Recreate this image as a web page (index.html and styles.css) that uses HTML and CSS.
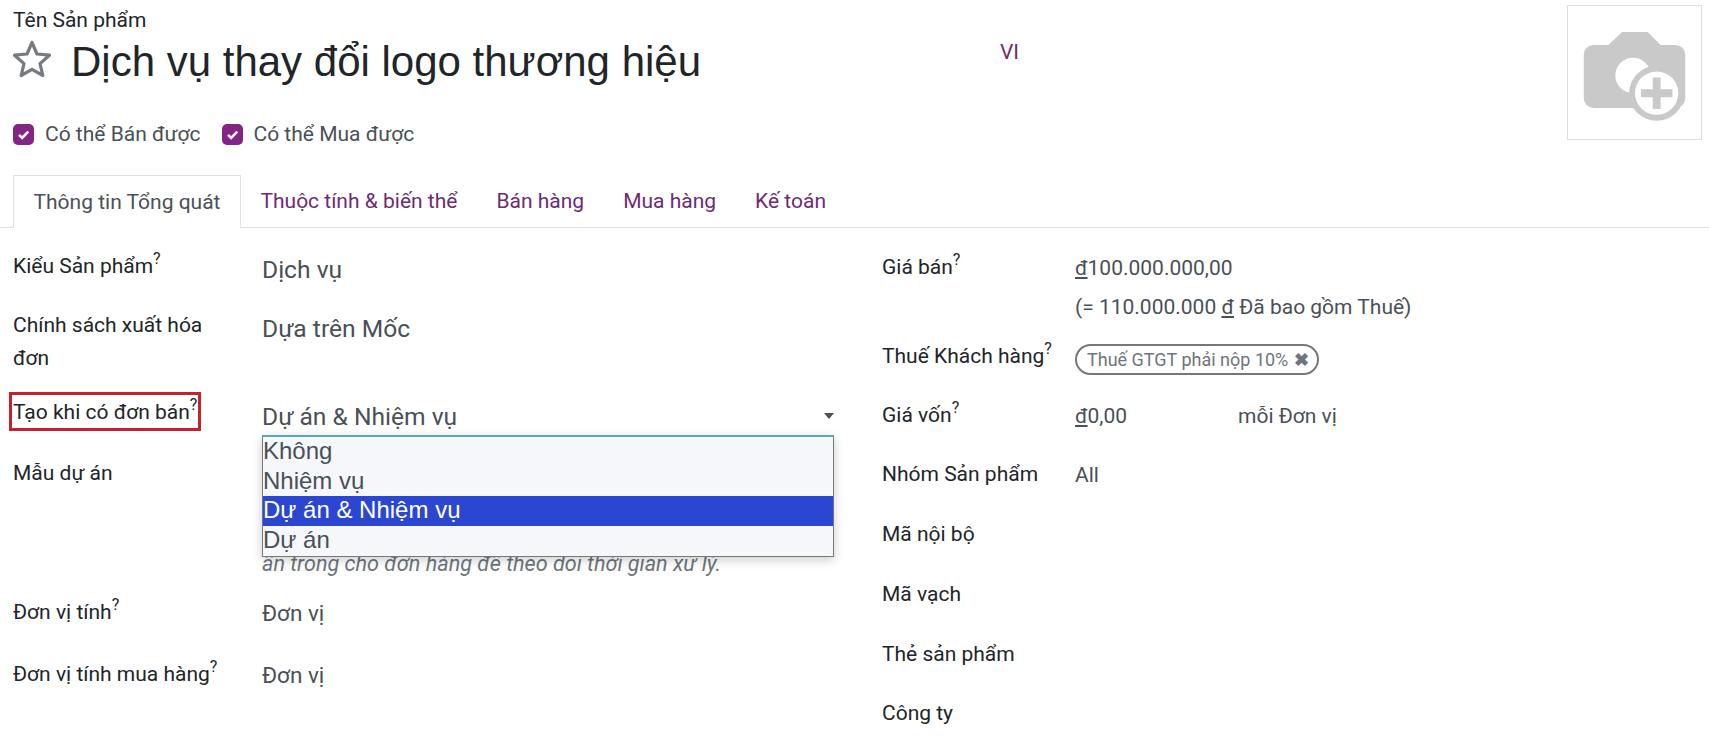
FILE: index.html

```html
<!DOCTYPE html>
<html lang="vi">
<head>
  <meta charset="UTF-8" />
  <title>Dịch vụ thay đổi logo thương hiệu</title>
  <link rel="stylesheet" href="styles.css">
</head>
<body>

  <header class="head">
    <div class="head-main">
      <div class="name-label">Tên Sản phẩm</div>
      <div class="title-row">
        <div class="title-left">
          <svg class="star" viewBox="0 0 40 38" width="40" height="38">
            <polygon points="20,2.5 25,14 37.5,15.2 28,23.6 30.8,35.5 20,29.3 9.2,35.5 12,23.6 2.5,15.2 15,14" fill="none" stroke="#757b80" stroke-width="3.2" stroke-linejoin="round"/>
          </svg>
          <h1 class="title">Dịch vụ thay đổi logo thương hiệu</h1>
        </div>
        <span class="lang">VI</span>
      </div>
      <div class="checks">
        <label class="check">
          <span class="box"><svg viewBox="0 0 21 21" width="21" height="21"><path d="M6 10.8l3.2 3.2 6-6.4" fill="none" stroke="#fff" stroke-width="2.6"/></svg></span>
          Có thể Bán được
        </label>
        <label class="check">
          <span class="box"><svg viewBox="0 0 21 21" width="21" height="21"><path d="M6 10.8l3.2 3.2 6-6.4" fill="none" stroke="#fff" stroke-width="2.6"/></svg></span>
          Có thể Mua được
        </label>
      </div>
    </div>
    <div class="photo">
      <svg viewBox="0 0 135 134" width="133" height="133">
        <path d="M41 39L55 26H81L94 39H109a10 10 0 0 1 10 10V93a10 10 0 0 1-10 10H26a10 10 0 0 1-10-10V49a10 10 0 0 1 10-10Z" fill="#c9c9c9"/>
        <circle cx="66" cy="70" r="18" fill="#fff"/>
        <circle cx="90" cy="88" r="28" fill="#c9c9c9"/>
        <circle cx="90" cy="88" r="22" fill="#fff"/>
        <path d="M86 72h8v12h12v8H94v12h-8V92H74v-8h12Z" fill="#c9c9c9"/>
      </svg>
    </div>
  </header>

  <nav class="tabs">
    <a class="tab active">Thông tin Tổng quát</a>
    <a class="tab">Thuộc tính &amp; biến thể</a>
    <a class="tab">Bán hàng</a>
    <a class="tab">Mua hàng</a>
    <a class="tab">Kế toán</a>
  </nav>

  <main class="form">
    <section class="col-left">
      <div class="row row-59">
        <div class="lbl">Kiểu Sản phẩm<sup>?</sup></div>
        <div class="val val-lg">Dịch vụ</div>
      </div>
      <div class="row row-89">
        <div class="lbl">Chính sách xuất hóa đơn</div>
        <div class="val val-lg">Dựa trên Mốc</div>
      </div>
      <div class="row row-59">
        <div class="lbl"><span class="marked">Tạo khi có đơn bán<sup>?</sup></span></div>
        <div class="val val-lg val-select">
          Dự án &amp; Nhiệm vụ
          <span class="caret"></span>
          <ul class="popup">
            <li>Không</li>
            <li>Nhiệm vụ</li>
            <li class="sel">Dự án &amp; Nhiệm vụ</li>
            <li>Dự án</li>
          </ul>
        </div>
      </div>
      <div class="row row-139">
        <div class="lbl">Mẫu dự án</div>
        <div class="val help">
          <span class="help-line">ẩn trong cho đơn hàng để theo dõi thời gian xử lý.</span>
        </div>
      </div>
      <div class="row row-62">
        <div class="lbl">Đơn vị tính<sup>?</sup></div>
        <div class="val val-uom">Đơn vị</div>
      </div>
      <div class="row">
        <div class="lbl">Đơn vị tính mua hàng<sup>?</sup></div>
        <div class="val val-uom">Đơn vị</div>
      </div>
    </section>

    <section class="col-right">
      <div class="row row-r-89">
        <div class="lbl">Giá bán<sup>?</sup></div>
        <div class="val">
          <div><u>đ</u>100.000.000,00</div>
          <div class="tax-note">(= 110.000.000 <u>đ</u> Đã bao gồm Thuế)</div>
        </div>
      </div>
      <div class="row row-r-59">
        <div class="lbl">Thuế Khách hàng<sup>?</sup></div>
        <div class="val"><span class="chip">Thuế GTGT phải nộp 10% <b class="chip-x">✖</b></span></div>
      </div>
      <div class="row row-r-59">
        <div class="lbl">Giá vốn<sup>?</sup></div>
        <div class="val cost"><span class="cost-num"><u>đ</u>0,00</span><span>mỗi Đơn vị</span></div>
      </div>
      <div class="row row-r-60">
        <div class="lbl">Nhóm Sản phẩm</div>
        <div class="val">All</div>
      </div>
      <div class="row row-r-60"><div class="lbl">Mã nội bộ</div></div>
      <div class="row row-r-60"><div class="lbl">Mã vạch</div></div>
      <div class="row row-r-59"><div class="lbl">Thẻ sản phẩm</div></div>
      <div class="row"><div class="lbl">Công ty</div></div>
    </section>
  </main>

</body>
</html>
```

FILE: styles.css

```css
body {
  margin: 0;
  height: 753px;
  overflow: hidden;
  background-color: #fff;
  color: #212529;
  font-family: Roboto, sans-serif;
  font-size: 21px;
}
sup {
  font-size: 16px;
  line-height: 0;
  vertical-align: 9px;
}

/* header */
.head {
  display: flex;
  justify-content: space-between;
  padding: 5px 7px 0 13px;
  height: 170px;
}
.head-main {
  width: 1006px;
}
.name-label {
  line-height: 27px;
  margin-top: 2px;
}
.title-row {
  display: flex;
  justify-content: space-between;
  align-items: flex-start;
  margin-top: 3px;
  height: 50px;
}
.title-left {
  display: flex;
  align-items: flex-start;
  gap: 19px;
  margin-left: -1px;
}
.star {
  margin-top: 3px;
}
.title {
  margin: 0;
  font-family: "Liberation Sans", Arial, sans-serif;
  font-weight: 400;
  font-size: 42px;
  line-height: 50px;
}
.lang {
  color: #6e2b74;
  line-height: 30px;
}
.checks {
  display: flex;
  gap: 21px;
  margin-top: 37px;
}
.check {
  display: flex;
  align-items: center;
  gap: 11px;
  color: #495057;
  line-height: 21px;
}
.box {
  width: 21px;
  height: 21px;
  border-radius: 5px;
  background-color: #842484;
}
.box svg {
  display: block;
}
.photo {
  width: 133px;
  height: 133px;
  border: 1px solid #dfdfdf;
}
.photo svg {
  display: block;
}

/* tabs */
.tabs {
  display: flex;
  padding-left: 13px;
  height: 52px;
  border-bottom: 1px solid #dee2e6;
}
.tab {
  padding: 0 19.5px;
  line-height: 53px;
  color: #6e2b74;
}
.tab.active {
  color: #495057;
  background-color: #fff;
  border: 1px solid #dee2e6;
  border-bottom: 0;
  height: 53px;
  box-sizing: border-box;
  line-height: 52px;
}

/* form */
.form {
  display: flex;
  padding: 22px 0 0 13px;
}
.col-left {
  width: 821px;
}
.col-left .val {
  width: 572px;
}
.col-right {
  margin-left: 48px;
  padding-top: 1px;
}
.row {
  display: flex;
}
.row-59 { height: 59px; }
.row-62 { height: 62px; }
.row-89 { height: 89px; }
.row-139 { height: 139px; }
.row-r-89 { height: 89px; }
.row-r-59 { height: 59px; }
.row-r-60 { height: 60px; }
.lbl {
  width: 249px;
  flex-shrink: 0;
  line-height: 33px;
  padding-right: 30px;
  box-sizing: border-box;
}
.col-right .lbl {
  width: 193px;
  padding-right: 0;
  white-space: nowrap;
}
.col-right .val {
  padding-top: 1px;
}
.val {
  color: #495057;
  line-height: 33px;
}
.val-lg {
  font-size: 24.6px;
  line-height: 39px;
}
.val-uom {
  font-size: 22.5px;
  padding-top: 1px;
}
.val-select {
  position: relative;
  height: 39px;
  line-height: 37px;
}
.marked {
  display: block;
  width: fit-content;
  outline: 3px solid #c5202e;
  white-space: nowrap;
  margin: -3px 0 0 -1px;
  padding: 2px 1px 0 1px;
  line-height: 31px;
}
.caret {
  position: absolute;
  right: 0;
  top: 15px;
  border-top: 6px solid #495057;
  border-left: 5px solid transparent;
  border-right: 5px solid transparent;
}
.popup {
  position: absolute;
  top: 37px;
  left: 0;
  width: 572px;
  box-sizing: border-box;
  margin: 0;
  padding: 0;
  list-style: none;
  background-color: #f5f7fa;
  border: 1px solid #777;
  border-top: 2px solid #5aa8b0;
  box-shadow: 0 3px 10px rgba(0, 0, 0, 0.2);
  z-index: 5;
  font-family: "Liberation Sans", Arial, sans-serif;
  font-size: 24px;
}
.popup li {
  height: 29.7px;
  line-height: 28px;
  color: #495057;
}
.popup li.sel {
  background-color: #2b46d1;
  color: #fff;
}
.help {
  padding-top: 90px;
  color: #6c757d;
  font-size: 21.6px;
  font-style: italic;
  white-space: nowrap;
}
.tax-note {
  margin-top: 6px;
}
.chip {
  display: inline-block;
  border: 2px solid #777;
  border-radius: 16px;
  padding: 0 8px 0 10px;
  color: #6c757d;
  font-size: 18px;
  line-height: 27px;
  margin-top: 3px;
}
.chip-x {
  color: #6c757d;
  font-size: 18px;
  margin-left: 1px;
}
.cost {
  display: flex;
}
.cost-num {
  width: 163px;
}
```
